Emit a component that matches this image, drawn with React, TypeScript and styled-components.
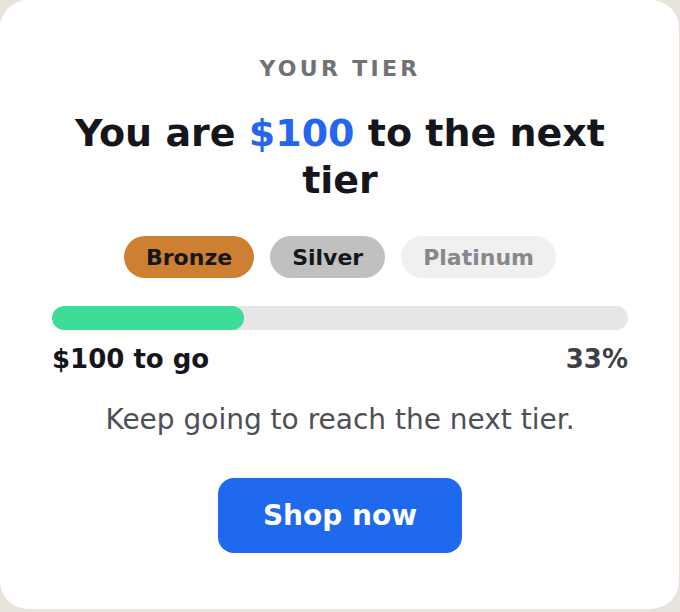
import styled, { createGlobalStyle } from "styled-components";

const GlobalStyle = createGlobalStyle`
  html, body {
    margin: 0;
    padding: 0;
    background: #e8e4dc;
  }
  body {
    font-family: "DejaVu Sans", "Liberation Sans", sans-serif;
  }
`;

interface Tier {
  name: string;
  bg: string;
  color: string;
}

const tiers: Tier[] = [
  { name: "Bronze", bg: "#cd7f32", color: "#16171a" },
  { name: "Silver", bg: "#c0c0c0", color: "#16171a" },
  { name: "Platinum", bg: "#f0f0f0", color: "#86888d" },
];

const progress = 1 / 3;

export default function App() {
  return (
    <>
      <GlobalStyle />
      <Card>
        <Eyebrow>YOUR TIER</Eyebrow>
        <Heading>
          You are <Amount>$100</Amount> to the next tier
        </Heading>
        <TierRow>
          {tiers.map((t) => (
            <TierPill key={t.name} $bg={t.bg} $color={t.color}>
              {t.name}
            </TierPill>
          ))}
        </TierRow>
        <ProgressBlock>
          <Track>
            <Fill style={{ width: `${progress * 100}%` }} />
          </Track>
          <ProgressLabels>
            <Remaining>$100 to go</Remaining>
            <Percent>{Math.round(progress * 100)}%</Percent>
          </ProgressLabels>
        </ProgressBlock>
        <Hint>Keep going to reach the next tier.</Hint>
        <ShopButton>Shop now</ShopButton>
      </Card>
    </>
  );
}

const Card = styled.div`
  box-sizing: border-box;
  width: 679px;
  height: 609px;
  background: #ffffff;
  border-radius: 28px;
  padding: 56px 51px 0 52px;
  display: flex;
  flex-direction: column;
  align-items: center;
  text-align: center;
`;

const Eyebrow = styled.div`
  font-size: 22px;
  font-weight: 700;
  letter-spacing: 3.3px;
  color: #707278;
  line-height: 26px;
`;

const Heading = styled.h1`
  margin: 28px 0 0;
  font-size: 38px;
  font-weight: 700;
  line-height: 47px;
  color: #14161b;
  max-width: 560px;
`;

const Amount = styled.span`
  color: #2467ee;
`;

const TierRow = styled.div`
  display: flex;
  gap: 16px;
  margin-top: 32px;
`;

const TierPill = styled.div<{ $bg: string; $color: string }>`
  height: 42px;
  padding: 0 22px;
  border-radius: 21px;
  display: flex;
  align-items: center;
  font-size: 22px;
  font-weight: 700;
  background: ${(p) => p.$bg};
  color: ${(p) => p.$color};
`;

const ProgressBlock = styled.div`
  align-self: stretch;
  margin-top: 28px;
`;

const Track = styled.div`
  height: 24px;
  border-radius: 12px;
  background: #e6e6e6;
  overflow: hidden;
`;

const Fill = styled.div`
  height: 100%;
  border-radius: 12px;
  background: #3ddc97;
`;

const ProgressLabels = styled.div`
  display: flex;
  justify-content: space-between;
  margin-top: 13px;
  font-size: 26px;
  font-weight: 700;
  line-height: 32px;
`;

const Remaining = styled.span`
  color: #14161b;
`;

const Percent = styled.span`
  color: #3f4046;
`;

const Hint = styled.p`
  margin: 28px 0 0;
  font-size: 28px;
  line-height: 34px;
  color: #4c5057;
`;

const ShopButton = styled.button`
  margin-top: 41px;
  width: 244px;
  height: 75px;
  border: none;
  border-radius: 16px;
  background: #1f69ee;
  color: #ffffff;
  font-family: inherit;
  font-size: 28px;
  font-weight: 700;
  cursor: pointer;
`;
